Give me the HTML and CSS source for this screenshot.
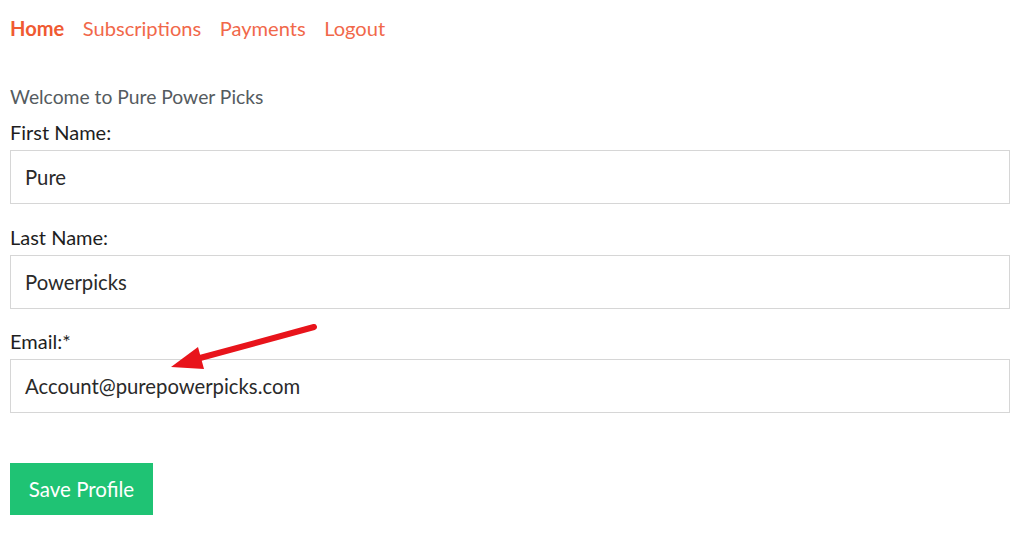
FILE: index.html
```html
<!DOCTYPE html>
<html>
<head>
<meta charset="utf-8">
<link rel="stylesheet" href="styles.css">
</head>
<body>
<div class="page">
  <nav class="nav">
    <a class="nav-link active" href="#">Home</a>
    <a class="nav-link" href="#">Subscriptions</a>
    <a class="nav-link" href="#">Payments</a>
    <a class="nav-link" href="#">Logout</a>
  </nav>
  <p class="welcome">Welcome to Pure Power Picks</p>
  <form class="profile">
    <div class="group">
      <label class="label">First Name:</label>
      <div class="field">Pure</div>
    </div>
    <div class="group">
      <label class="label">Last Name:</label>
      <div class="field">Powerpicks</div>
    </div>
    <div class="group">
      <label class="label">Email:*</label>
      <div class="field">Account@purepowerpicks.com</div>
    </div>
    <button class="save" type="button">Save Profile</button>
  </form>
  <svg class="arrow" width="1024" height="536" viewBox="0 0 1024 536">
    <line x1="314" y1="327" x2="200" y2="358" stroke="#e8141b" stroke-width="6" stroke-linecap="round"/>
    <polygon points="171,367 198,347 204,369" fill="#e8141b"/>
  </svg>
</div>
</body>
</html>
```
FILE: styles.css
```css
* { box-sizing: border-box; }
html, body { margin: 0; padding: 0; background: #fff; }
body { font-family: Lato, "Open Sans", sans-serif; font-size: 20px; line-height: 26px; color: #222; }
.page { position: relative; width: 1024px; height: 536px; padding: 15px 14px 0 10px; }
.nav { display: flex; gap: 18.5px; height: 26px; }
.nav-link { color: #f1684a; text-decoration: none; font-size: 20.1px; }
.nav-link.active { color: #f05a32; font-weight: 700; }
.welcome { margin: 43px 0 9px; color: #555b60; font-size: 19.3px; }
.profile { margin: 0; }
.group { display: flex; flex-direction: column; margin-bottom: 19.5px; }
.label { display: block; margin-bottom: 5px; color: #1e1e1e; }
.field { height: 54px; border: 1.5px solid #d6d6d6; padding: 0 14px; display: flex; align-items: center; color: #2a2a2a; font-size: 20.3px; background: #fff; }
.save { margin-top: 30px; height: 52px; width: 143px; border: none; background: #1fc374; color: #fff; font-family: Lato, sans-serif; font-size: 20.5px; padding: 0; cursor: pointer; }
.arrow { position: absolute; left: 0; top: 0; pointer-events: none; }
```
